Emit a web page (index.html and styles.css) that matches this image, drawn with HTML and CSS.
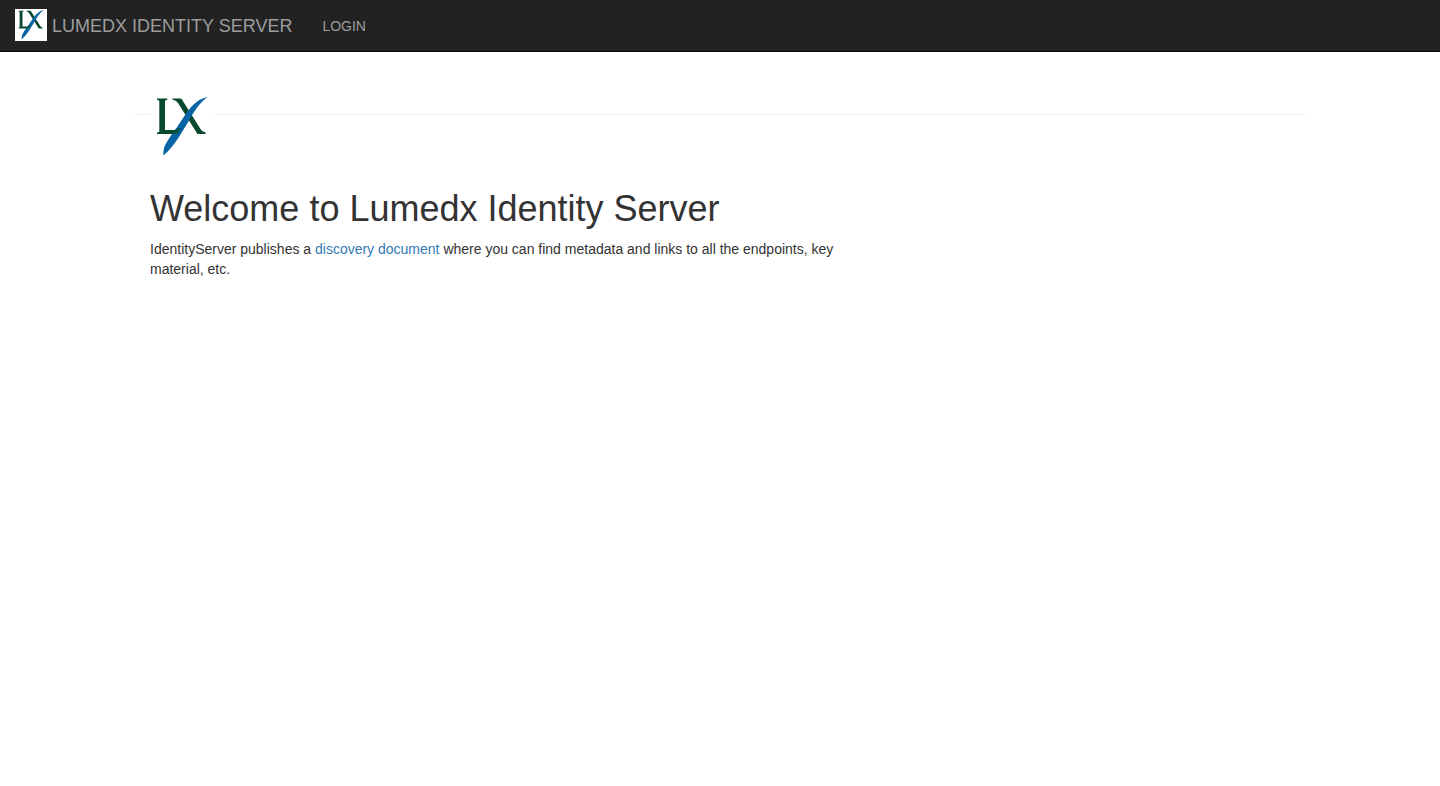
FILE: index.html
```html
<!DOCTYPE html>
<html lang="en">
<head>
<meta charset="utf-8">
<meta name="viewport" content="width=device-width, initial-scale=1">
<title>Lumedx Identity Server</title>
<link rel="stylesheet" href="styles.css">
</head>
<body>
<svg class="sprite" aria-hidden="true">
  <symbol id="logo" viewBox="0 0 64 64">
    <path fill="#fff" d="M0 0h64v64H0z"/>
    <path fill="#07492c" d="M7 3.500h10.300v1.200l-2.300 1v29.300h9c2 0 3.500-.7 5-2.300l1.500.5-3 5.800H7v-1.300l2.300-1V5.700L7 4.700zM22.500 3.500h8.800L50.500 34c1.300 1.900 2.500 2.800 5 3.300V39h-8L28 8c-1.200-1.700-2.600-2.500-5.500-3.300z"/>
    <path fill="#0764a5" d="M57.500 2C50 3.500 44.500 8 39.500 14 34 21 31 26.500 27.500 31.500 22 39 18 44.500 15 50.500c-1.400 3-1.700 6-1.700 10C19 56 23 50.500 28 43.500c4-6 6-10 9-14.500C43 18 49 8 57.500 2z"/>
    <path fill="#07492c" opacity=".7" d="M23.500 35.300l5.500-2.300h2l-3 6h-7z"/>
  </symbol>
</svg>
<header class="navbar">
  <a class="brand" href="#">
    <svg class="brand-logo" aria-hidden="true"><use href="#logo"/></svg>
    <span class="brand-name">LUMEDX IDENTITY SERVER</span>
  </a>
  <nav><a class="nav-link" href="#">LOGIN</a></nav>
</header>
<main class="container">
  <div class="masthead">
    <hr class="rule">
    <svg class="logo" role="img" aria-label="Lumedx"><use href="#logo"/></svg>
  </div>
  <section class="welcome">
    <h1>Welcome to Lumedx Identity Server</h1>
    <p>IdentityServer publishes a <a href="#">discovery document</a> where you can find metadata and links to all the endpoints, key material, etc.</p>
  </section>
</main>
</body>
</html>
```
FILE: styles.css
```css
* {
  box-sizing: border-box;
}

body {
  margin: 0;
  background: #fff;
  color: #333;
  font: 14px/20px "Liberation Sans", Arial, sans-serif;
}

.sprite {
  position: absolute;
  width: 0;
  height: 0;
}

.navbar {
  display: flex;
  align-items: center;
  gap: 30px;
  padding: 9px 15px 10px;
  background: #222;
  border-bottom: 1px solid #080808;
}

.brand {
  display: flex;
  align-items: center;
  gap: 5px;
  color: #9d9d9d;
  font-size: 18px;
  text-decoration: none;
}

.brand-logo {
  width: 32px;
  height: 32px;
}

.brand-name,
.nav-link {
  display: block;
  padding-top: 2px;
}

.nav-link {
  color: #9d9d9d;
  text-decoration: none;
}

.container {
  max-width: 1170px;
  margin: 0 auto;
  padding-top: 43px;
}

.masthead {
  display: grid;
  padding-bottom: 30px;
}

.rule,
.logo {
  grid-area: 1 / 1;
}

.rule {
  width: 100%;
  height: 1px;
  margin: 19px 0 0;
  border: 0;
  background: #eee;
}

.logo {
  width: 64px;
  height: 64px;
  margin-left: 15px;
}

.welcome {
  max-width: 750px;
  padding: 0 15px;
}

h1 {
  margin: 0 0 10px;
  font-size: 36px;
  font-weight: 500;
  line-height: 40px;
}

p {
  margin: 0;
}

p a {
  color: #337ab7;
  text-decoration: none;
}
```
